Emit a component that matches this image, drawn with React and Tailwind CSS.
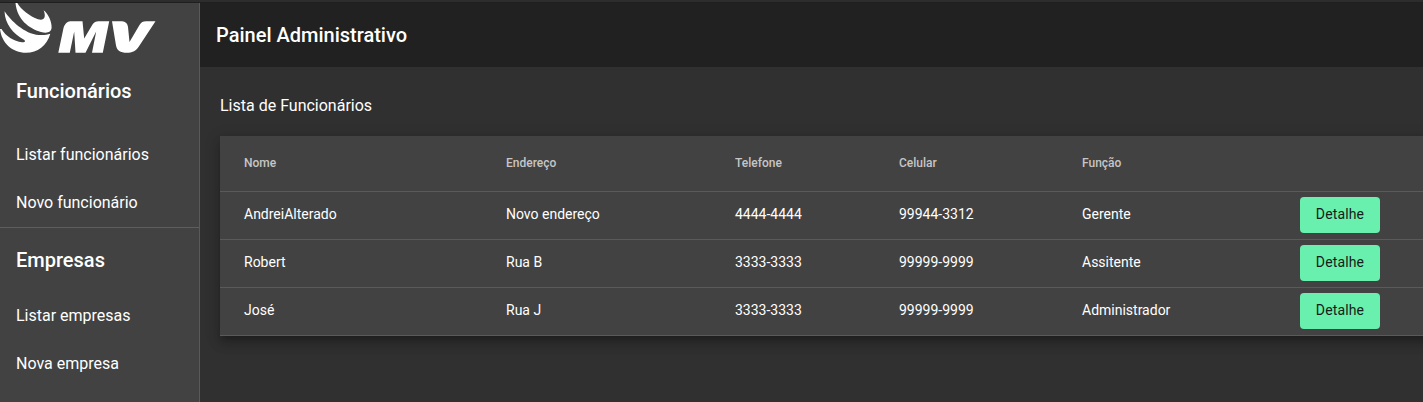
const rows = [
  ['AndreiAlterado', 'Novo endereço', '4444-4444', '99944-3312', 'Gerente'],
  ['Robert', 'Rua B', '3333-3333', '99999-9999', 'Assitente'],
  ['José', 'Rua J', '3333-3333', '99999-9999', 'Administrador'],
];

const columns = 'grid grid-cols-[262px_229px_164px_183px_218px_80px] pl-6';

function Logo() {
  return (
    <svg className="block h-[56px] w-[160px]" viewBox="0 3 160 56" fill="#fff" role="img">
      <path d="M15.5 3H17.3C21 9.5 30 16.5 38 19.2C44 21 46.5 17.5 43.6 10.3C48.5 14 52 22 51.6 28C51.2 32.5 47 33.5 41 32C29 28.5 17 19.5 15.5 3Z" />
      <path d="M4.5 11.2C11 20.5 24 33.8 39 35C43.5 35.3 47.5 34.8 50.3 33.7C47 45.5 37.5 52.8 26 52.8C12.5 52.8 1.5 43 0 29L1.5 29C5.5 36 14 41.5 22 42.3C25 42.6 26 41.3 24 39.8C13 33.5 5 24 4.5 11.2Z" />
      <path d="M58.3 52.8L63.5 28C65 23 67.5 21.2 72 21.2H82.5L84.2 38.5L92.5 24.5C94 22 96 21.2 98.5 21.2H109.2L102.8 52.8H92L96.2 31.5L85.5 52.8H75.5L74.2 31.5L69.8 52.8Z" />
      <path d="M112 21.2H120C125.5 21.2 127.5 23 128 27L129.5 42L139.5 25C141.3 22.2 143 21.2 146 21.2H155.5L138.5 47C135.5 51.3 132 52.8 127 52.8C120 52.8 117 50.5 116 45.5Z" />
    </svg>
  );
}

function Group({ title, items, gap }) {
  return (
    <section>
      <h2 className="flex h-16 items-center px-4 text-[20px] font-medium">{title}</h2>
      <nav className={gap}>
        {items.map((item) => (
          <a key={item} className="flex h-12 items-center px-4 text-base">{item}</a>
        ))}
      </nav>
    </section>
  );
}

export default function App() {
  return (
    <div className="flex h-[402px] flex-col overflow-hidden bg-[#303030] font-['Roboto',sans-serif] text-white">
      <div className="h-[3px] shrink-0 border-b border-[#1f1f1f] bg-[#2d2d2d]" />
      <div className="flex min-h-0 flex-1">
        <aside className="w-[200px] shrink-0 border-r border-[#5a5a5a] bg-[#424242]">
          <Logo />
          <Group title="Funcionários" items={['Listar funcionários', 'Novo funcionário']} gap="pt-2" />
          <div className="h-px bg-[#5e5e5e]" />
          <Group title="Empresas" items={['Listar empresas', 'Nova empresa']} gap="pt-0" />
        </aside>
        <main className="min-w-0 flex-1">
          <header className="flex h-16 items-center bg-[#212121] px-4">
            <h1 className="text-[20px] font-medium">Painel Administrativo</h1>
          </header>
          <div className="pl-5 pt-[27px]">
            <h3 className="text-base leading-6">Lista de Funcionários</h3>
            <div className="mt-[18px] w-[1223px] bg-[#424242] shadow-[0_5px_5px_-3px_rgba(0,0,0,0.2),0_8px_10px_1px_rgba(0,0,0,0.14),0_3px_14px_2px_rgba(0,0,0,0.12)]">
              <div className={`${columns} h-14 items-center border-b border-[#5a5a5a] pb-px text-xs font-medium text-[#c6c6c6]`}>
                {['Nome', 'Endereço', 'Telefone', 'Celular', 'Função'].map((label) => (
                  <span key={label}>{label}</span>
                ))}
              </div>
              {rows.map((row) => (
                <div key={row[0]} className={`${columns} h-12 items-center border-b border-[#5a5a5a] text-sm`}>
                  {row.map((cell, i) => (
                    <span key={i} className="pb-1">{cell}</span>
                  ))}
                  <button className="mb-px h-9 w-20 rounded bg-[#69f0ae] pb-0.5 text-sm leading-[34px] tracking-[0.15px] text-[#15201a]">
                    Detalhe
                  </button>
                </div>
              ))}
            </div>
          </div>
        </main>
      </div>
    </div>
  );
}
